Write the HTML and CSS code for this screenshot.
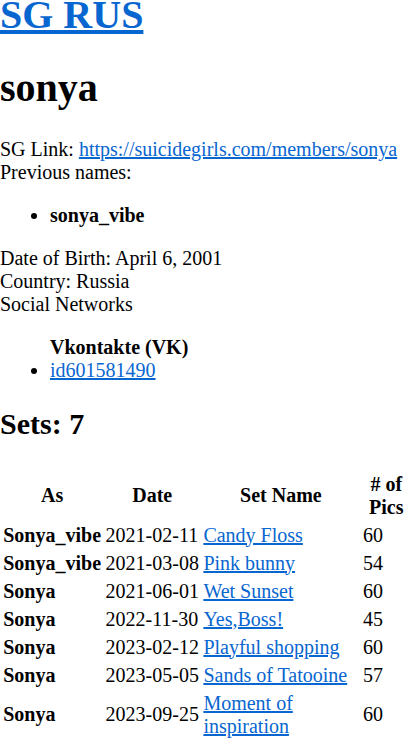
FILE: index.html
```html
<!DOCTYPE html>
<html lang="en">
<head>
    <meta charset="UTF-8">
    <title>sonya - SG RUS</title>
    <link rel="stylesheet" href="styles.css">
</head>
<body>
    <h1 class="site-title"><a href="#">SG RUS</a></h1>

    <h1 class="model-name">sonya</h1>

    <div>SG Link: <a href="#">https://suicidegirls.com/members/sonya</a></div>
    <div>Previous names:</div>
    <ul>
        <li><b>sonya_vibe</b></li>
    </ul>
    <div>Date of Birth: April 6, 2001</div>
    <div>Country: Russia</div>
    <div>Social Networks</div>
    <ul class="socials">
        <div class="net-name">Vkontakte (VK)</div>
        <li><a href="#">id601581490</a></li>
    </ul>

    <h2>Sets: 7</h2>
    <table class="sets">
        <thead>
            <tr>
                <th>As</th>
                <th>Date</th>
                <th class="name">Set Name</th>
                <th># of Pics</th>
            </tr>
        </thead>
        <tbody>
            <tr><td class="as">Sonya_vibe</td><td class="date">2021-02-11</td><td class="name"><a href="#">Candy Floss</a></td><td>60</td></tr>
            <tr><td class="as">Sonya_vibe</td><td class="date">2021-03-08</td><td class="name"><a href="#">Pink bunny</a></td><td>54</td></tr>
            <tr><td class="as">Sonya</td><td class="date">2021-06-01</td><td class="name"><a href="#">Wet Sunset</a></td><td>60</td></tr>
            <tr><td class="as">Sonya</td><td class="date">2022-11-30</td><td class="name"><a href="#">Yes,Boss!</a></td><td>45</td></tr>
            <tr><td class="as">Sonya</td><td class="date">2023-02-12</td><td class="name"><a href="#">Playful shopping</a></td><td>60</td></tr>
            <tr><td class="as">Sonya</td><td class="date">2023-05-05</td><td class="name"><a href="#">Sands of Tatooine</a></td><td>57</td></tr>
            <tr><td class="as">Sonya</td><td class="date">2023-09-25</td><td class="name"><a href="#">Moment of inspiration</a></td><td>60</td></tr>
        </tbody>
    </table>
</body>
</html>
```

FILE: styles.css
```css
body {
    margin: 0;
    font-family: "Liberation Serif", "Times New Roman", serif;
    font-size: 20px;
    line-height: 1.15;
    color: #000;
}
a {
    color: #0866d0;
}
h1 {
    font-size: 40px;
    margin: 27px 0;
}
.site-title {
    margin-top: -8px;
}
h2 {
    font-size: 30px;
    margin: 25px 0 27px;
}
ul {
    margin: 20px 0;
    padding-left: 50px;
}
.net-name {
    font-weight: bold;
}
.sets {
    border-spacing: 2.5px 3px;
}
.sets th,
.sets td {
    padding: 1px 1.25px;
}
.sets .as {
    font-weight: bold;
}
.sets .date {
    white-space: nowrap;
}
.sets .name {
    width: 155px;
}
```
